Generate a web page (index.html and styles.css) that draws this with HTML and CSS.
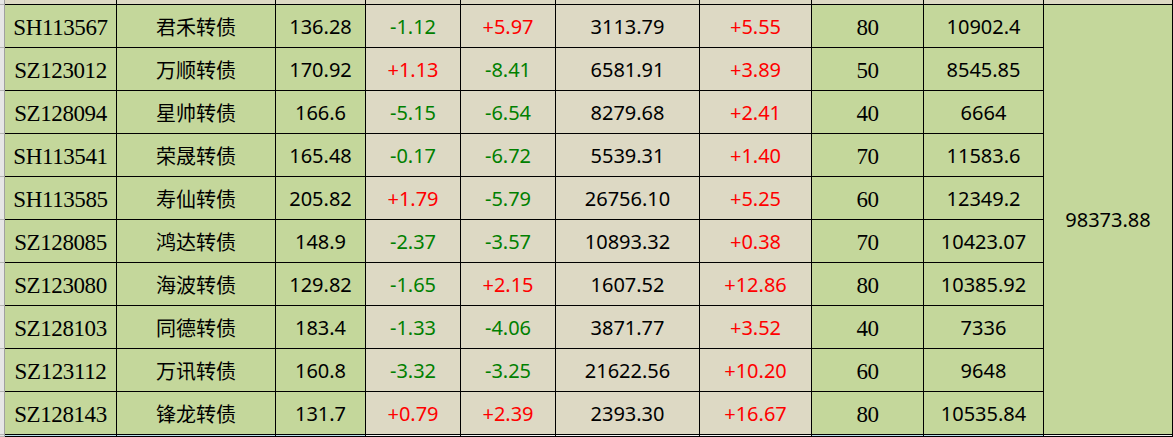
FILE: index.html
```html
<!DOCTYPE html>
<html lang="zh">
<head>
<meta charset="utf-8">
<title>转债</title>
<link rel="stylesheet" href="styles.css">
</head>
<body>
<div class="sheet">
  <div class="gut"></div><div class="c t"></div><div class="c t"></div><div class="c t"></div><div class="c t"></div><div class="c t"></div><div class="c t"></div><div class="c t"></div><div class="c t"></div><div class="c t"></div><div class="c t"></div>

  <div class="gut"></div><div class="c g serif">SH113567</div><div class="c g cn">君禾转债</div><div class="c g num">136.28</div><div class="c t num dn">-1.12</div><div class="c t num up">+5.97</div><div class="c t num">3113.79</div><div class="c t num up">+5.55</div><div class="c g serif">80</div><div class="c g num">10902.4</div>
  <div class="c g num total">98373.88</div>

  <div class="gut"></div><div class="c g serif">SZ123012</div><div class="c g cn">万顺转债</div><div class="c g num">170.92</div><div class="c t num up">+1.13</div><div class="c t num dn">-8.41</div><div class="c t num">6581.91</div><div class="c t num up">+3.89</div><div class="c g serif">50</div><div class="c g num">8545.85</div>

  <div class="gut"></div><div class="c g serif">SZ128094</div><div class="c g cn">星帅转债</div><div class="c g num">166.6</div><div class="c t num dn">-5.15</div><div class="c t num dn">-6.54</div><div class="c t num">8279.68</div><div class="c t num up">+2.41</div><div class="c g serif">40</div><div class="c g num">6664</div>

  <div class="gut"></div><div class="c g serif">SH113541</div><div class="c g cn">荣晟转债</div><div class="c g num">165.48</div><div class="c t num dn">-0.17</div><div class="c t num dn">-6.72</div><div class="c t num">5539.31</div><div class="c t num up">+1.40</div><div class="c g serif">70</div><div class="c g num">11583.6</div>

  <div class="gut"></div><div class="c g serif">SH113585</div><div class="c g cn">寿仙转债</div><div class="c g num">205.82</div><div class="c t num up">+1.79</div><div class="c t num dn">-5.79</div><div class="c t num">26756.10</div><div class="c t num up">+5.25</div><div class="c g serif">60</div><div class="c g num">12349.2</div>

  <div class="gut"></div><div class="c g serif">SZ128085</div><div class="c g cn">鸿达转债</div><div class="c g num">148.9</div><div class="c t num dn">-2.37</div><div class="c t num dn">-3.57</div><div class="c t num">10893.32</div><div class="c t num up">+0.38</div><div class="c g serif">70</div><div class="c g num">10423.07</div>

  <div class="gut"></div><div class="c g serif">SZ123080</div><div class="c g cn">海波转债</div><div class="c g num">129.82</div><div class="c t num dn">-1.65</div><div class="c t num up">+2.15</div><div class="c t num">1607.52</div><div class="c t num up">+12.86</div><div class="c g serif">80</div><div class="c g num">10385.92</div>

  <div class="gut"></div><div class="c g serif">SZ128103</div><div class="c g cn">同德转债</div><div class="c g num">183.4</div><div class="c t num dn">-1.33</div><div class="c t num dn">-4.06</div><div class="c t num">3871.77</div><div class="c t num up">+3.52</div><div class="c g serif">40</div><div class="c g num">7336</div>

  <div class="gut"></div><div class="c g serif">SZ123112</div><div class="c g cn">万讯转债</div><div class="c g num">160.8</div><div class="c t num dn">-3.32</div><div class="c t num dn">-3.25</div><div class="c t num">21622.56</div><div class="c t num up">+10.20</div><div class="c g serif">60</div><div class="c g num">9648</div>

  <div class="gut"></div><div class="c g serif">SZ128143</div><div class="c g cn">锋龙转债</div><div class="c g num">131.7</div><div class="c t num up">+0.79</div><div class="c t num up">+2.39</div><div class="c t num">2393.30</div><div class="c t num up">+16.67</div><div class="c g serif">80</div><div class="c g num">10535.84</div>

  <div class="gut"></div><div class="c b"></div><div class="c b"></div><div class="c b"></div><div class="c w"></div><div class="c w"></div><div class="c w"></div><div class="c w"></div><div class="c b"></div><div class="c b"></div><div class="c w"></div>
</div>
</body>
</html>
```

FILE: styles.css
```css
* { box-sizing: border-box; }
html, body { margin: 0; padding: 0; background: #ffffff; overflow: hidden; }

.sheet {
  display: grid;
  grid-template-columns: 5px 112px 159px 90px 95px 95px 144px 112px 112px 120px 129px;
  grid-template-rows: 5px repeat(10, 43px) 2px;
  width: 1173px;
  height: 437px;
}

.gut {
  background: #e6e6e6;
  border-right: 1px solid #a0a0a0;
  border-bottom: 1px solid #b4b4b4;
}

.c {
  border-right: 1px solid #000;
  border-bottom: 1px solid #000;
  display: flex;
  align-items: center;
  justify-content: center;
  color: #000;
  white-space: nowrap;
  overflow: hidden;
}

.g { background: #c4d79b; }
.t { background: #ddd9c4; }
.b { background: #b7dee8; }
.w { background: #f2f2f2; }

.serif {
  font-family: "Liberation Serif", "Times New Roman", serif;
  font-size: 23px;
  letter-spacing: -0.4px;
  padding-top: 4px;
}

.cn {
  font-family: "Noto Sans CJK SC", "Noto Sans", sans-serif;
  font-size: 20px;
  padding-top: 1px;
}

.num {
  font-family: "Noto Sans", "Liberation Sans", sans-serif;
  font-size: 20px;
}

.up { color: #ff0000; }
.dn { color: #008000; }

.total {
  grid-column: 11;
  grid-row: 2 / span 10;
}
```
